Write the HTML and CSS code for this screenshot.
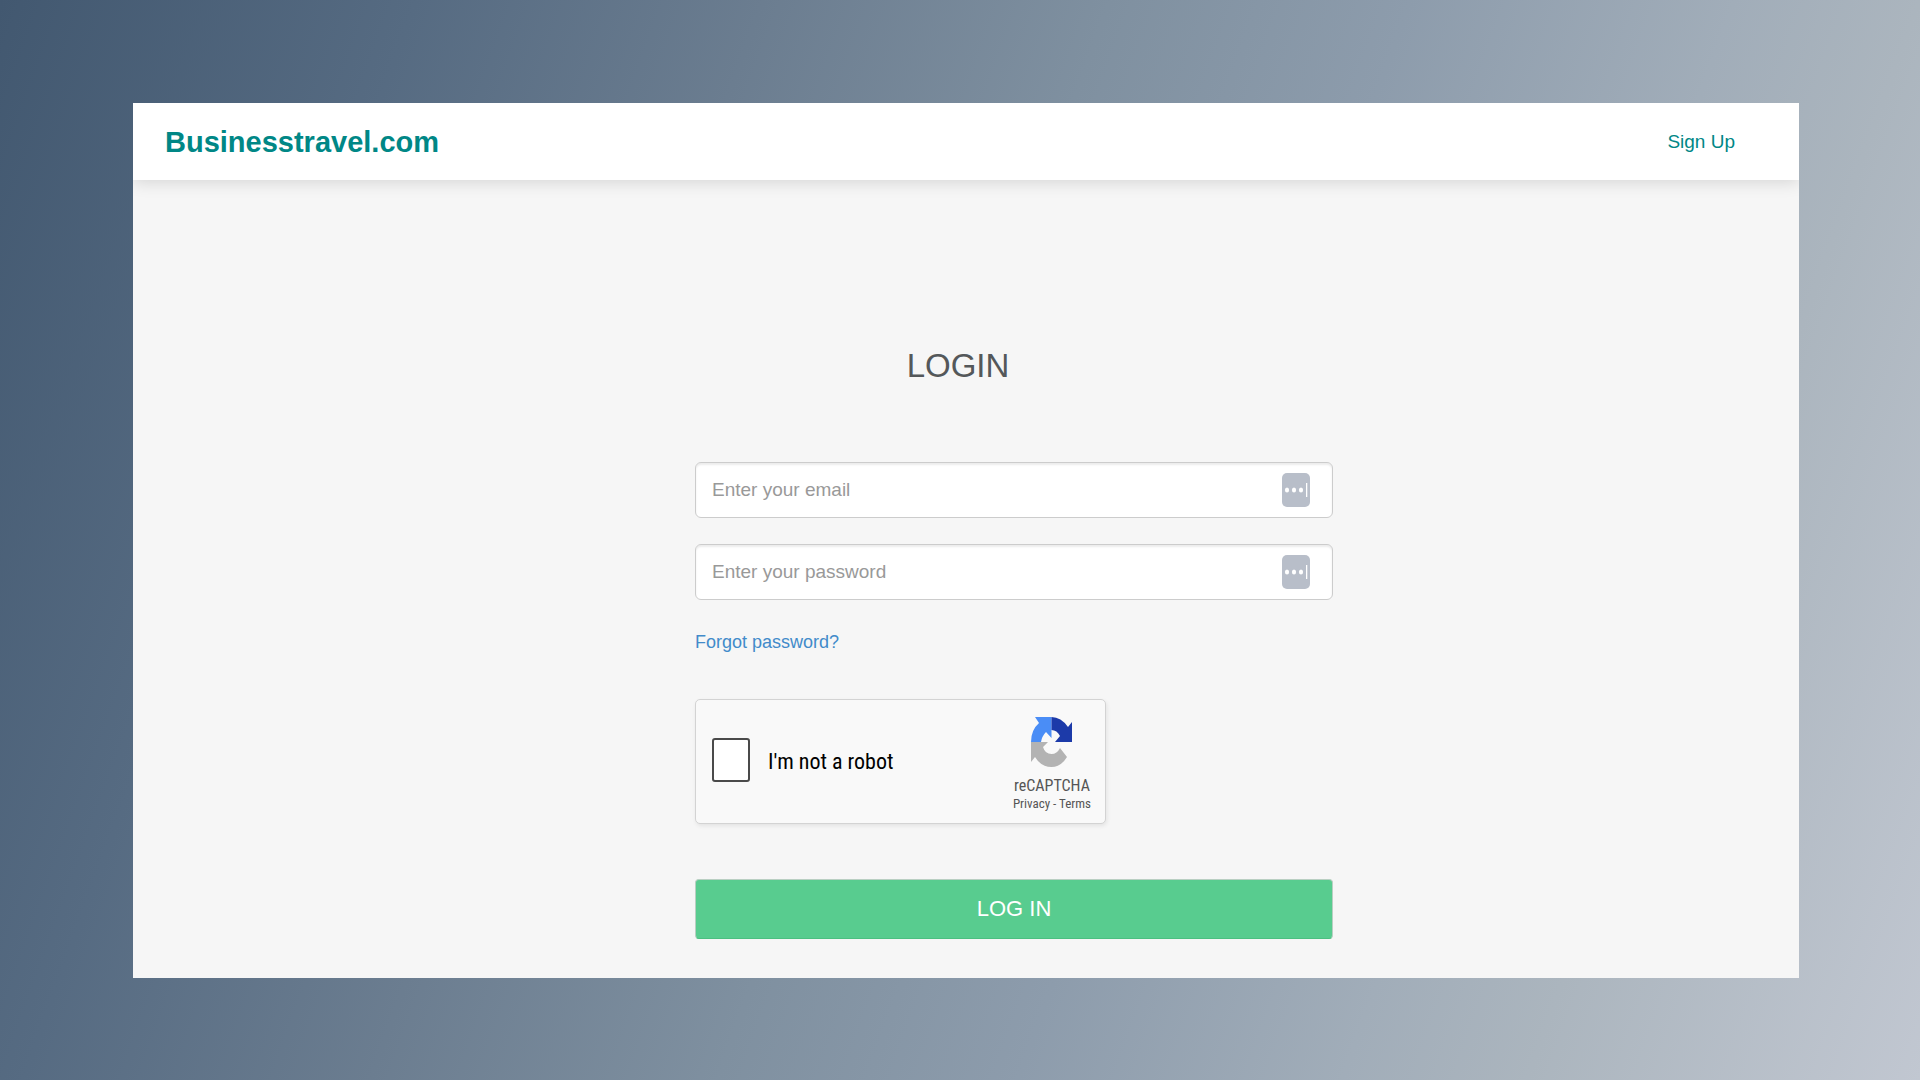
FILE: index.html
```html
<!DOCTYPE html>
<html lang="en">
<head>
<meta charset="utf-8">
<meta name="viewport" content="width=device-width, initial-scale=1">
<title>Businesstravel.com - Login</title>
<link rel="stylesheet" href="styles.css">
</head>
<body>
<div class="panel">
  <header class="topbar">
    <a class="brand" href="#">Businesstravel.com</a>
    <nav><a class="signup" href="#">Sign Up</a></nav>
  </header>
  <main class="content">
    <h1 class="title">LOGIN</h1>
    <form class="form">
      <div class="field">
        <input class="field-input" type="email" placeholder="Enter your email" aria-label="Email">
        <svg class="field-icon" viewBox="0 0 28 34" aria-hidden="true">
          <rect width="28" height="34" rx="5" fill="#b8bec9"/>
          <g fill="#fff"><ellipse cx="5" cy="17" rx="2.1" ry="2.6"/><ellipse cx="12" cy="17" rx="2.1" ry="2.6"/><ellipse cx="19" cy="17" rx="2.1" ry="2.6"/><rect x="24" y="10" width="1.3" height="14"/></g>
        </svg>
      </div>
      <div class="field">
        <input class="field-input" type="password" placeholder="Enter your password" aria-label="Password">
        <svg class="field-icon" viewBox="0 0 28 34" aria-hidden="true">
          <rect width="28" height="34" rx="5" fill="#b8bec9"/>
          <g fill="#fff"><ellipse cx="5" cy="17" rx="2.1" ry="2.6"/><ellipse cx="12" cy="17" rx="2.1" ry="2.6"/><ellipse cx="19" cy="17" rx="2.1" ry="2.6"/><rect x="24" y="10" width="1.3" height="14"/></g>
        </svg>
      </div>
      <a class="forgot" href="#">Forgot password?</a>
      <div class="captcha">
        <input class="captcha-box" type="checkbox" id="robot">
        <label class="captcha-label" for="robot">I'm not a robot</label>
        <div class="captcha-brand">
          <svg class="captcha-logo" viewBox="0 0 41 50" aria-hidden="true">
            <path fill="#4a8df6" d="M20.500 0H4L8 6Q0 13 0 25H10Q11 19 15 15L20.500 21Z"/>
            <path fill="#1c3aa9" d="M20.500 0V13Q26 13 29 19L24 25H41V5L37 10Q30 0 20.500 0Z"/>
            <path fill="#b3b3b3" d="M0 25V45L4 40Q10 50 20.500 50Q30 50 36 40L29 31Q26 37 20.500 37Q14 37 12 30L17 25Z"/>
          </svg>
          <span class="captcha-name">reCAPTCHA</span>
          <span class="captcha-links"><a href="#">Privacy</a> - <a href="#">Terms</a></span>
        </div>
      </div>
      <button class="submit" type="button">LOG IN</button>
    </form>
  </main>
</div>
</body>
</html>
```
FILE: styles.css
```css
* {
  box-sizing: border-box;
}

body {
  margin: 0;
  min-height: 100vh;
  padding: 103px 121px 102px 133px;
  display: flex;
  font-family: "Liberation Sans", Arial, sans-serif;
  background: linear-gradient(110deg, #425870 0%, #566b82 18%, #6b7d90 33%, #7f90a0 48%, #8d9cac 61%, #a1adb9 75%, #abb5be 83%, #c1c7d1 100%);
}

a {
  text-decoration: none;
}

.panel {
  flex: 1;
  display: flex;
  flex-direction: column;
  background: #f6f6f6;
}

.topbar {
  display: flex;
  align-items: center;
  justify-content: space-between;
  height: 77px;
  padding: 0 64px 0 32px;
  background: #fff;
  box-shadow: 0 2px 16px rgba(0, 0, 0, 0.14);
  clip-path: inset(0 0 -24px 0);
}

.brand {
  font-size: 29px;
  font-weight: 700;
  line-height: 40px;
  color: #008786;
}

.signup {
  font-size: 19px;
  line-height: 40px;
  color: #008786;
}

.content {
  padding: 160px 0 38px;
}

.title {
  margin: 0 0 71px;
  padding-right: 16px;
  font-size: 33px;
  font-weight: 400;
  line-height: 51px;
  text-align: center;
  color: #54585a;
}

.form {
  width: calc(100% * 638 / 1666);
  margin-left: calc(100% * 562 / 1666);
  display: flex;
  flex-direction: column;
}

.field {
  display: flex;
  align-items: center;
  height: 56px;
  margin-bottom: 26px;
  padding-right: 22px;
  border: 1px solid #ccc;
  border-radius: 6px;
  background: #fff;
  box-shadow: inset 0 2px 2px rgba(0, 0, 0, 0.08);
}

.field-input {
  flex: 1;
  min-width: 0;
  height: 100%;
  padding: 0 16px;
  border: 0;
  background: transparent;
  font: inherit;
  font-size: 19px;
  color: #555;
}

.field-input::placeholder {
  color: #999;
  opacity: 1;
}

.field-icon {
  width: 28px;
  height: 34px;
}

.forgot {
  align-self: flex-start;
  font-size: 18px;
  line-height: 32px;
  color: #428bca;
}

.captcha {
  display: flex;
  align-items: center;
  align-self: flex-start;
  width: 411px;
  height: 125px;
  margin: 41px 0 55px;
  padding: 6px 14px 0 16px;
  border: 1px solid #d3d3d3;
  border-radius: 5px;
  background: #f9f9f9;
  box-shadow: 1px 2px 4px rgba(0, 0, 0, 0.08);
  font-family: "Roboto Condensed", Roboto, sans-serif;
}

.captcha-box {
  appearance: none;
  width: 38px;
  height: 44px;
  margin: 0 18px 10px 0;
  border: 2px solid #4a4a4a;
  border-radius: 3px;
  background: #fff;
}

.captcha-label {
  flex: 1;
  padding-bottom: 6px;
  font-size: 22px;
  color: #000;
}

.captcha-brand {
  display: flex;
  flex-direction: column;
  align-items: center;
  color: #555;
}

.captcha-logo {
  width: 41px;
  height: 50px;
  margin-bottom: 9px;
}

.captcha-name {
  font-size: 16px;
  line-height: 20px;
}

.captcha-links {
  font-size: 13px;
  line-height: 16px;
}

.captcha-links a {
  color: inherit;
}

.submit {
  height: 60px;
  padding: 0;
  border: 1px solid #b9cfc2;
  border-bottom-color: #4cbf81;
  border-radius: 4px;
  background: #58cc8f;
  font: inherit;
  font-size: 22px;
  color: #fff;
}
```
